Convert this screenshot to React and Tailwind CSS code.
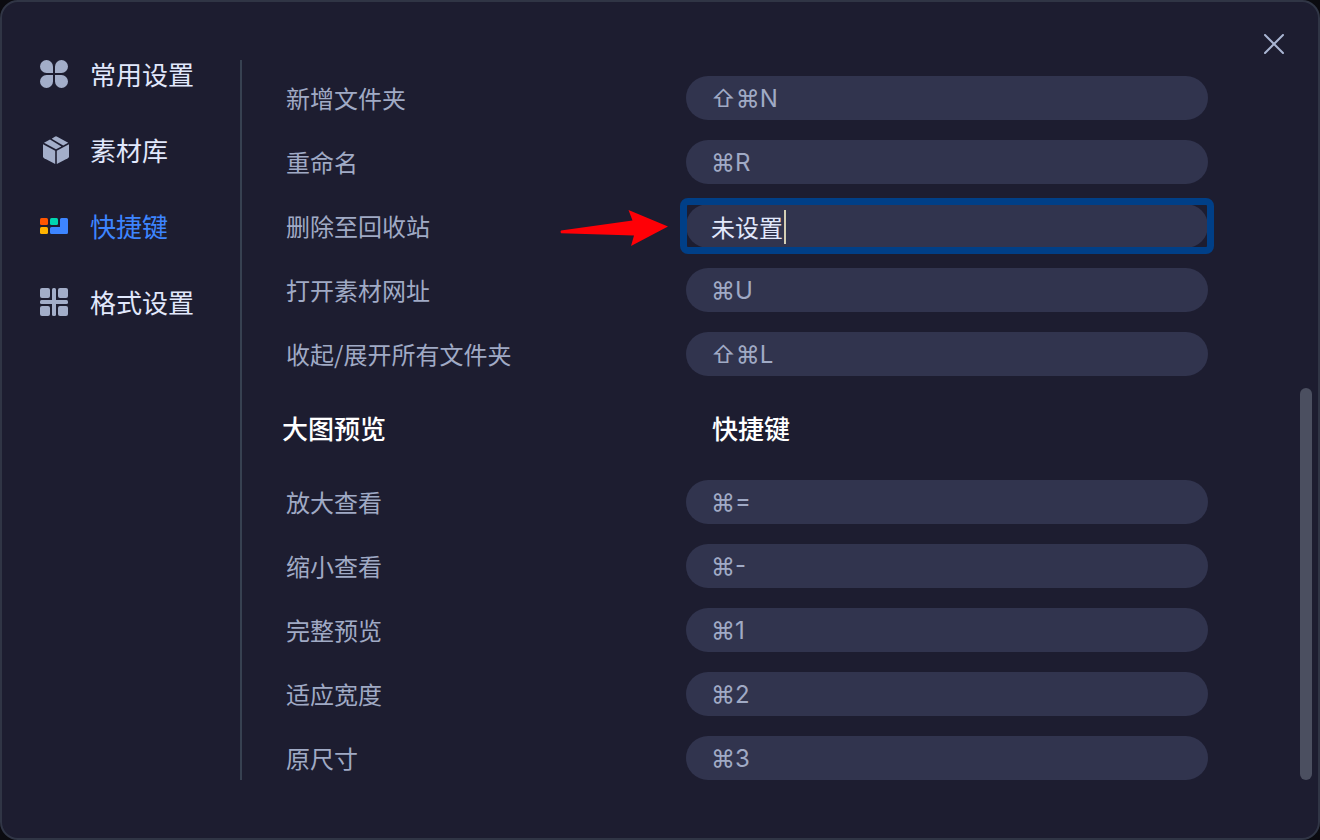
const NAV = [
  { label: "常用设置", icon: CloverIcon },
  { label: "素材库", icon: BoxIcon },
  { label: "快捷键", icon: KeysIcon, active: true },
  { label: "格式设置", icon: FormatIcon },
];

const FILE_KEYS = [
  { id: "new-folder", label: "新增文件夹", value: "⇧⌘N" },
  { id: "rename", label: "重命名", value: "⌘R" },
  { id: "trash", label: "删除至回收站", value: "未设置", editing: true },
  { id: "open-url", label: "打开素材网址", value: "⌘U" },
  { id: "toggle-folders", label: "收起/展开所有文件夹", value: "⇧⌘L" },
];

const PREVIEW_KEYS = [
  { id: "zoom-in", label: "放大查看", value: "⌘=" },
  { id: "zoom-out", label: "缩小查看", value: "⌘-" },
  { id: "fit", label: "完整预览", value: "⌘1" },
  { id: "fit-width", label: "适应宽度", value: "⌘2" },
  { id: "actual-size", label: "原尺寸", value: "⌘3" },
];

function CloverIcon() {
  return (
    <svg className="size-7 shrink-0" viewBox="0 0 28 28" fill="#a3aec9" aria-hidden="true">
      <path d="M6.5 0A6.5 6.5 0 0 1 13 6.5V13H6.5A6.5 6.5 0 0 1 6.5 0Z" />
      <path d="M21.5 0A6.5 6.5 0 0 0 15 6.5V13h6.5a6.5 6.5 0 0 0 0-13Z" />
      <path d="M6.5 28A6.5 6.5 0 0 0 13 21.5V15H6.5a6.5 6.5 0 0 0 0 13Z" />
      <path d="M21.5 28A6.5 6.5 0 0 1 15 21.5V15h6.5a6.5 6.5 0 0 1 0 13Z" />
    </svg>
  );
}

function BoxIcon() {
  return (
    <svg className="size-7 shrink-0 overflow-visible" viewBox="-2 0 28 28" fill="#a3aec9" aria-hidden="true">
      <path d="M1 8.3 13.200 14.700V28L2.200 22.300Q1 21.600 1 20.400Z" />
      <path d="M27 8.3 14.800 14.700V28L25.800 22.300Q27 21.600 27 20.400Z" />
      <path d="M2 6.700 8 3.600 19.400 10.400 14 13.200Z" />
      <path d="M9.700 2.700 12.800 0.700Q14 0 15.200 0.700L26.200 6.700 21.200 9.400Z" />
    </svg>
  );
}

function KeysIcon() {
  return (
    <svg className="size-7 shrink-0" viewBox="0 0 28 28" aria-hidden="true">
      <rect x="0" y="6" width="8" height="7" rx="1.5" fill="#ff5500" />
      <rect x="10" y="6" width="8" height="7" rx="1.5" fill="#00d6b0" />
      <rect x="0" y="15" width="8" height="7" rx="1.5" fill="#ffb300" />
      <path
        d="M21.5 6h5Q28 6 28 7.5v13q0 1.5-1.5 1.5h-15Q10 22 10 20.5v-4Q10 15 11.5 15H20V7.5Q20 6 21.5 6Z"
        fill="#3d85ff"
      />
    </svg>
  );
}

function FormatIcon() {
  return (
    <svg className="size-7 shrink-0" viewBox="0 0 28 28" fill="#a3aec9" aria-hidden="true">
      <rect x="0" y="0" width="10" height="10" rx="2" />
      <rect x="18" y="0" width="10" height="10" rx="2" />
      <rect x="0" y="18" width="10" height="10" rx="2" />
      <rect x="18" y="18" width="10" height="10" rx="2" />
      <rect x="12" y="0" width="4" height="28" rx="1.5" />
      <rect x="0" y="12" width="28" height="4" rx="1.5" />
    </svg>
  );
}

function ArrowMark() {
  return (
    <svg
      className="pointer-events-none absolute top-1 right-full mr-4 h-10 w-28"
      viewBox="0 0 112 40"
      fill="#ff0006"
      aria-hidden="true"
    >
      <path d="M3 22.5Q2 23.5 3 25.3L76 27.5 73 38 110 18.5 70.5 2 74.5 12.5Z" />
    </svg>
  );
}

function ShortcutRow({ id, label, value, editing }) {
  return (
    <div className="flex h-11 items-center">
      <label htmlFor={id} className="w-100 shrink-0 text-2xl text-[#a0aac5]">
        {label}
      </label>
      <div className="relative flex-1">
        <input
          id={id}
          type="text"
          readOnly
          value={value}
          className={
            "block h-11 w-full rounded-full bg-[#31344e] px-[25px] font-['Inter','Noto_Sans_CJK_SC',sans-serif] text-2xl outline-none " +
            (editing ? "text-[#e1e8fc]" : "text-[#a0aac5]")
          }
        />
        {editing && (
          <>
            <span className="pointer-events-none absolute -inset-1.5 rounded-lg border-[7px] border-[#003f87]" />
            <span className="pointer-events-none absolute top-1.5 left-[98px] h-[34px] w-0.5 bg-[#d3ceb4]" />
            <ArrowMark />
          </>
        )}
      </div>
    </div>
  );
}

export default function App() {
  return (
    <div className="min-h-screen bg-[#0b0b10] font-['Noto_Sans_CJK_SC',sans-serif]">
      <main className="flex min-h-screen rounded-[18px] border-2 border-[#303545] bg-[#1d1d30]">
        <nav aria-label="设置" className="my-[58px] w-60 shrink-0 border-r-2 border-[#374151]">
          <ul className="-mt-6">
            {NAV.map(({ label, icon: Icon, active }) => (
              <li key={label}>
                <a
                  href="#"
                  aria-current={active ? "page" : undefined}
                  className={
                    "flex h-19 items-center gap-[22px] pl-[38px] text-[26px] leading-8 " +
                    (active ? "text-[#3d85ff]" : "text-[#e1e8fc]")
                  }
                >
                  <Icon />
                  {label}
                </a>
              </li>
            ))}
          </ul>
        </nav>

        <form className="flex flex-1 flex-col gap-5 pt-[74px] pb-[58px] pl-11">
          {FILE_KEYS.map((row) => (
            <ShortcutRow key={row.id} {...row} />
          ))}
          <div className="flex h-16 items-center text-[26px] leading-8 font-medium text-white">
            <h2 className="-ml-1 w-107.5 shrink-0">大图预览</h2>
            <h2>快捷键</h2>
          </div>
          {PREVIEW_KEYS.map((row) => (
            <ShortcutRow key={row.id} {...row} />
          ))}
        </form>

        <div className="flex w-[110px] shrink-0 flex-col items-end justify-between pt-6.5 pr-1.5 pb-[58px]">
          <button type="button" aria-label="关闭" className="mr-[22px] p-1.5">
            <svg className="size-5" viewBox="0 0 20 20" stroke="#a9b5d2" strokeWidth="2" strokeLinecap="round" aria-hidden="true">
              <path d="M1 1 19 19M19 1 1 19" />
            </svg>
          </button>
          <div className="h-98 w-3 rounded-full bg-[#4b4f60]" />
        </div>
      </main>
    </div>
  );
}
